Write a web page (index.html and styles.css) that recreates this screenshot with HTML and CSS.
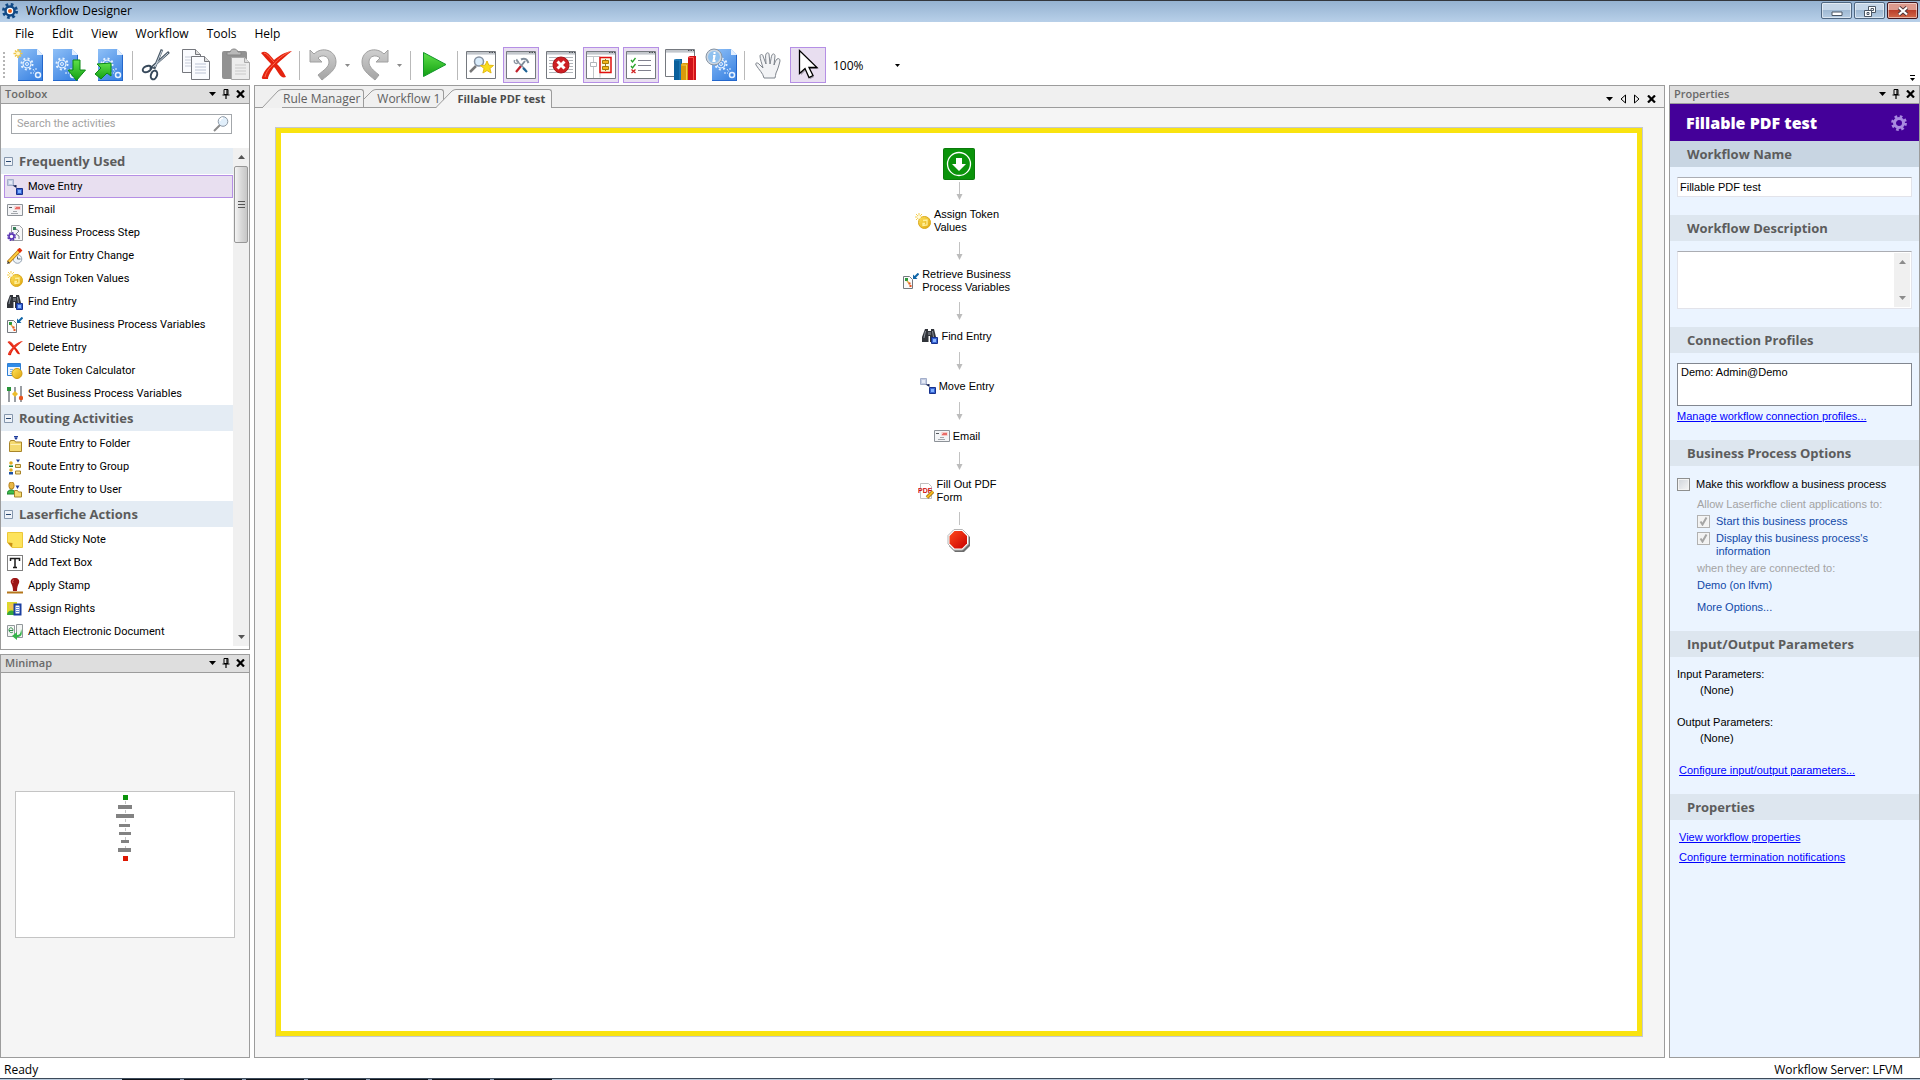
FILE: index.html
```html
<!DOCTYPE html>
<html lang="en">
<head>
    <meta charset="UTF-8">
    <meta name="viewport" content="width=device-width, initial-scale=1.0">
    <title>Workflow Designer</title>
    <link rel="stylesheet" href="styles.css">
</head>
<body>
    <!-- Shared icons -->
    <svg class="sprite" aria-hidden="true">
        <defs>
            <linearGradient id="gBlue" x1="0" y1="0" x2="0.6" y2="1">
                <stop offset="0" stop-color="#8fc0f7"/><stop offset="1" stop-color="#3f86e3"/>
            </linearGradient>
            <linearGradient id="gGreen" x1="0" y1="0" x2="0" y2="1">
                <stop offset="0" stop-color="#5fe04a"/><stop offset="1" stop-color="#12a012"/>
            </linearGradient>
            <linearGradient id="gGray" x1="0" y1="0" x2="0" y2="1">
                <stop offset="0" stop-color="#cfcfcf"/><stop offset="1" stop-color="#a4a4a4"/>
            </linearGradient>
            <linearGradient id="gGold" x1="0" y1="0" x2="1" y2="1">
                <stop offset="0" stop-color="#ffe45c"/><stop offset="1" stop-color="#dfa40c"/>
            </linearGradient>
            <linearGradient id="gStop" x1="0" y1="0" x2="1" y2="1">
                <stop offset="0" stop-color="#ff4a1c"/><stop offset="1" stop-color="#c80000"/>
            </linearGradient>

            <symbol id="sheet" viewBox="0 0 25 32">
                <path d="M0 0h19l6 6v26H0z" fill="url(#gBlue)"/>
                <path d="M0 32h25V6" fill="none" stroke="#2467cc" stroke-width="2"/>
                <path d="M19 0v6h6z" fill="#e4f0ff"/>
                <circle cx="9" cy="15" r="4" fill="none" stroke="#e6f2ff"/>
                <circle cx="9" cy="15" r="5.500" fill="none" stroke="#e6f2ff" stroke-width="2" stroke-dasharray="2 2.300"/>
                <circle cx="9" cy="15" r="1.500" fill="none" stroke="#e6f2ff"/>
                <circle cx="20" cy="26" r="2.500" fill="none" stroke="#e6f2ff" stroke-width="1.500"/>
                <path d="M12 24h4M15 20l2 3M18 19v3" stroke="#e6f2ff" fill="none" stroke-dasharray="2 1"/>
            </symbol>
            <symbol id="win" viewBox="0 0 30 28">
                <path d="M.5.5h29v27H.5z" fill="#fff" stroke="#75797f"/>
                <path d="M1 1h28v2H1z" fill="#c3c7cc"/>
                <path d="M1 3.500h28" stroke="#d9dce0"/>
                <path d="M23 1.500h1.500M25.500 1.500h1.500M28 1.500h1" stroke="#4c5157"/>
            </symbol>
            <symbol id="caret" viewBox="0 0 7 4"><path d="M0 0h7L3.500 4z" fill="currentColor"/></symbol>
            <symbol id="pin" viewBox="0 0 8 10">
                <path d="M2 .5h4v5H2z" fill="none" stroke="#000"/><path d="M5 1v5M.5 6h7M4 6v4" stroke="#000" stroke-width="1.200" fill="none"/>
            </symbol>
            <symbol id="close" viewBox="0 0 9 8"><path d="M1 .5l7 7M8 .5l-7 7" stroke="#000" stroke-width="2.200"/></symbol>
            <symbol id="magnifier" viewBox="0 0 16 16">
                <path d="M7 9l-6 6" stroke="#8c8c8c" stroke-width="2"/>
                <circle cx="10" cy="5.500" r="4.800" fill="#e1effb" stroke="#8d99a6"/>
                <path d="M7 5a3 3 0 0 1 3-3" stroke="#fff" stroke-width="1.500" fill="none"/>
            </symbol>
            <symbol id="collapse" viewBox="0 0 9 9">
                <path d="M.5.5h8v8h-8z" fill="#eef2f8" stroke="#8597ad"/><path d="M2 4.500h5" stroke="#26466e"/>
            </symbol>

            <symbol id="move" viewBox="0 0 16 16">
                <path d="M.5.5h6v6h-6z" fill="#c3cce2" stroke="#a3aeca"/><path d="M2 2h3v3H2z" fill="#e4e9f5"/>
                <path d="M5.500 6.500l4 2.500V6z" fill="#101d52"/>
                <path d="M9.500 9.500h6v6h-6z" fill="#3765d2" stroke="#17318e"/><path d="M11 11h3v3h-3z" fill="#7fb0ff"/>
            </symbol>
            <symbol id="email" viewBox="0 0 16 16">
                <path d="M.5 2.500h15v11H.5z" fill="#f3f4f6" stroke="#8d9298"/>
                <path d="M2 5.500h3" stroke="#55595e"/><path d="M7.500 4h6v4h-6z" fill="#f6c6c4"/><path d="M9 5.500h4M8 6.500h5" stroke="#e86c68"/>
                <path d="M6 9.500h4M4 11.500h7" stroke="#a1a6ab"/>
            </symbol>
            <symbol id="bpstep" viewBox="0 0 16 16">
                <path d="M4.500.5h8l3 3v12h-11z" fill="#f7f7f8" stroke="#9b9ea3"/>
                <path d="M6 2h3v3H6z" fill="#39805a"/><path d="M9 4l3 2-3 3 3 2M12 11v3" fill="none" stroke="#7b818a"/>
                <circle cx="4.500" cy="11.500" r="3.700" fill="none" stroke="#5b36b4" stroke-width="1.500" stroke-dasharray="1.700 1.200"/>
                <circle cx="4.500" cy="11.500" r="2.500" fill="#fff" stroke="#5b36b4" stroke-width="1.600"/>
            </symbol>
            <symbol id="wait" viewBox="0 0 16 16">
                <circle cx="10.500" cy="11" r="4.300" fill="#eef3f8" stroke="#93a1b0"/><path d="M10.500 8.500V11h3" fill="none" stroke="#566472"/>
                <path d="M1 14.500L12.500 2.500" stroke="#b47616" stroke-width="3.600"/><path d="M1.500 14L12 3" stroke="#ffce3e" stroke-width="2"/>
                <path d="M11.500 3.500l2.500-2.500" stroke="#e2320d" stroke-width="4"/><path d="M0 16l1-3 2 2z" fill="#3b3b3b"/>
            </symbol>
            <symbol id="token" viewBox="0 0 16 16">
                <circle cx="9.500" cy="9.500" r="6" fill="url(#gGold)" stroke="#d9a81c"/>
                <path d="M8 7.500l4-.5v5l-4 .5v-2h2" fill="none" stroke="#fff09a" stroke-width="1.300"/>
                <path d="M4 0v8M0 4h8M1 1l6 6M7 1L1 7" stroke="#f5cd4c"/><circle cx="4" cy="4" r="1.800" fill="#fffbe0"/>
            </symbol>
            <symbol id="find" viewBox="0 0 16 16">
                <path d="M3 1h3v2h3V1h3l2 8v5H8V8H6.500v6H0V9z" fill="#31343a"/>
                <path d="M3.500 3L2 10M10.500 3l1 6" stroke="#8d939c"/><path d="M6 4h3v3H6z" fill="#62666d"/>
                <path d="M9.500 9.500h6v6h-6z" fill="#3765d2" stroke="#17318e"/><path d="M11 11h3v3h-3z" fill="#8db7ff"/>
            </symbol>
            <symbol id="retrieve" viewBox="0 0 16 16">
                <path d="M.5 3.500h6l3 3v9h-9z" fill="#fafafa" stroke="#74787e"/>
                <path d="M2 5h3v3H2z" fill="#2d9a3c"/><path d="M4 8l3 3" stroke="#e5b04d" stroke-width="1.500"/>
                <path d="M5.500 9.500h2v2h-2zM6.500 12h2v2h-2z" fill="#e8551f"/>
                <path d="M15.500.5l-4 4" stroke="#0f66a8" stroke-width="2"/><path d="M10 1.500V6h4.500z" fill="#0f66a8"/>
            </symbol>
            <symbol id="delete" viewBox="0 0 32 28">
                <path d="M1 2C5-1 8 1 14 9 20 4 25 1 32 0 26 5 21 9 17 13c5 5 7 9 9 13-3 1-5 0-7-3-2-3-3-5-5-7-3 4-6 9-6 12-4 1-7 0-6-2 2-6 5-9 9-13C7 9 4 5 1 2z" fill="#e4230f"/>
                <path d="M4 2c4 1 6 5 10 9M29 1c-6 3-12 8-15 12-4 3-8 8-9 13" fill="none" stroke="#ff6e50"/>
            </symbol>
            <symbol id="datetoken" viewBox="0 0 16 16">
                <path d="M.5.500h13v12H.500z" fill="#eef5fd" stroke="#2f7fd4"/><path d="M1 1h12v3H1z" fill="#2f8be8"/>
                <path d="M3 6.500h3M3 8.500h2M3 10.500h2" stroke="#7eb1ea"/>
                <circle cx="10" cy="10.500" r="5" fill="url(#gGold)" stroke="#cf9a10"/>
            </symbol>
            <symbol id="setvars" viewBox="0 0 16 16">
                <path d="M2 1v15M8 1v15M14 0v16" stroke="#6f757c" stroke-width="1.400"/>
                <path d="M0 1h4v4H0z" fill="#29943a"/><path d="M8 5l3 3-3 3-3-3z" fill="#edbd2a"/><circle cx="14" cy="12" r="2.200" fill="#e8551f"/>
            </symbol>
            <symbol id="folder" viewBox="0 0 16 16">
                <path d="M2.500 6.500l1-2h4l1 1.500h6v9.500h-12z" fill="#f4da70" stroke="#a9852a"/><path d="M3.500 8.500h10" stroke="#fff2b8"/>
                <path d="M7 .5h4M9 0v3" stroke="#1e3c9c"/><path d="M7 1.500h4L9 4z" fill="#1e3c9c"/>
            </symbol>
            <symbol id="group" viewBox="0 0 16 16">
                <circle cx="4" cy="4" r="1.800" fill="#e2ac22"/><path d="M2 8V6.500h4V8z" fill="#1c8434"/>
                <circle cx="4" cy="11" r="1.800" fill="#e2ac22"/><path d="M2 15.500V13h4v2.500z" fill="#1b51a8"/>
                <path d="M8.500 5.500h5v3h-5zM8.500 12h5v3h-5z" fill="#f6e19a" stroke="#a9852a"/><path d="M9 .5h4L11 3.500z" fill="#1e3c9c"/>
            </symbol>
            <symbol id="user" viewBox="0 0 16 16">
                <path d="M0 12c0-5 8-6 8 0z" fill="#3fbd4c" stroke="#1a7f2a"/><rect x="2" y="0" width="5" height="7" rx="2.500" fill="#e8b745" stroke="#b57f17"/>
                <path d="M7.500 8.500h3l1 1.500h3v5h-7z" fill="#f4da70" stroke="#a9852a"/><path d="M8.500 3.500h4L10.500 7z" fill="#1e3c9c"/>
            </symbol>
            <symbol id="sticky" viewBox="0 0 16 16">
                <path d="M.5.500h15v15H5l-4.500-5z" fill="#fde35c" stroke="#ecc838"/><path d="M.5 10.500l5 .5-.5 4.500z" fill="#c78f13"/>
            </symbol>
            <symbol id="textbox" viewBox="0 0 16 16">
                <path d="M.5.500h15v15H.500z" fill="#fff" stroke="#000" stroke-dasharray="1 1"/>
                <path d="M3.500 6V3.500h9V6M8 3.500v9M6 12.500h4" fill="none" stroke="#1b1b1b" stroke-width="1.500"/>
            </symbol>
            <symbol id="stamp" viewBox="0 0 16 16">
                <path d="M8 0c3 0 5 2 4 5-1 2-2 4-2 8H6c0-4-1-6-2-8-1-3 1-5 4-5z" fill="#9c1515"/><path d="M7 2c-1 0-2 1-1 3" stroke="#d66" fill="none"/>
                <path d="M0 14.500h16" stroke="#b5761b" stroke-width="2"/>
            </symbol>
            <symbol id="rights" viewBox="0 0 16 16">
                <path d="M0 1h10v12H0z" fill="#ded82b"/><path d="M0 14c0-6 9-6 9 0z" fill="#35a83a"/><circle cx="5" cy="5.500" r="3" fill="#f2c34f"/>
                <path d="M7.500 3.500h6v10h-6z" fill="#fff" stroke="#1b3fa0" stroke-width="2"/><path d="M9 6.500h3M9 8.500h3M9 10.500h3" stroke="#6c90dd"/>
            </symbol>
            <symbol id="attach" viewBox="0 0 16 16">
                <path d="M.5 1.500h7v11h-7zM9.500.500h6v13h-6z" fill="#f4f6f4" stroke="#92989b"/>
                <path d="M2 6.500h4C6 3 2 3 2 6s3 3 4 2" fill="none" stroke="#2f8f49"/><path d="M14 5c0 5-2 6-4 6V8l-5 4 5 4v-3c4 0 6-2 4-8z" fill="#35b44a"/>
            </symbol>
            <symbol id="pdf" viewBox="0 0 16 16">
                <path d="M2.500.500h8l3 3v12h-11z" fill="#fff" stroke="#c0c0c0"/>
                <text x="0" y="10" font-family="Liberation Sans" font-size="7" font-weight="700" fill="#cf1010">PDF</text>
                <path d="M9 14.500l6-6" stroke="#8a6510" stroke-width="3.600"/><path d="M9 14.500l6-6" stroke="#f5b81e" stroke-width="2.200"/>
            </symbol>
            <symbol id="arrow" viewBox="0 0 7 18">
                <path d="M3.500 0v13" stroke="#c2c2c2"/><path d="M.5 12h6L3.500 18z" fill="#bcbcbc"/>
            </symbol>
        </defs>
    </svg>

    <header class="titlebar">
        <svg class="app-icon" viewBox="0 0 16 16">
            <circle cx="8" cy="8" r="6.500" fill="none" stroke="#124a86" stroke-width="3" stroke-dasharray="2.600 2.500"/>
            <circle cx="8" cy="8" r="4.500" fill="#fff" stroke="#124a86" stroke-width="2.500"/><circle cx="8" cy="8" r="2" fill="#e8601c"/>
        </svg>
        <h1>Workflow Designer</h1>
        <div class="window-buttons">
            <button class="window-btn" aria-label="Minimize"><svg viewBox="0 0 12 12"><path d="M1 7h10v3.500H1z" fill="#fff" stroke="#4b5765"/></svg></button>
            <button class="window-btn" aria-label="Restore"><svg viewBox="0 0 12 12"><path d="M4.500 1.500h7v6h-7zM7 3.500h2.500v2H7z" fill="#fff" stroke="#4b5765"/><path d="M.5 5.500h7v6h-7zM3 7.500h2v2H3z" fill="#fff" stroke="#4b5765"/></svg></button>
            <button class="window-btn window-close" aria-label="Close"><svg viewBox="0 0 12 12"><path d="M2 2.500l8 7M10 2.500l-8 7" stroke="#4c3438" stroke-width="4"/><path d="M2 2.500l8 7M10 2.500l-8 7" stroke="#fff" stroke-width="2.200"/></svg></button>
        </div>
    </header>

    <nav class="menubar">
        <button>File</button>
        <button>Edit</button>
        <button>View</button>
        <button>Workflow</button>
        <button>Tools</button>
        <button>Help</button>
    </nav>

    <div class="toolbar">
        <span class="grip"></span>
        <button class="tool" aria-label="New workflow"><svg viewBox="0 0 36 36">
            <use href="#sheet" x="7" y="2" width="25" height="32"/>
            <path d="M7 2v9M2.500 6.500h9M4 3.500l6 6M10 3.500l-6 6" stroke="#efc64a" stroke-width="1.500"/><circle cx="7" cy="6.500" r="2" fill="#fff7c8"/>
        </svg></button>
        <button class="tool" aria-label="Import"><svg viewBox="0 0 36 36">
            <use href="#sheet" x="2" y="2" width="25" height="32"/>
            <path d="M22 13h7v10h5.500L25.500 33.500 17 23h5z" fill="url(#gGreen)" stroke="#0c8a14"/>
        </svg></button>
        <button class="tool" aria-label="Publish"><svg viewBox="0 0 36 36">
            <use href="#sheet" x="7" y="2" width="25" height="32"/>
            <path d="M20 16v13l-4-3-6 6-6-5 6-6-4-4z" fill="url(#gGreen)" stroke="#0c8a14"/>
        </svg></button>
        <span class="sep"></span>
        <button class="tool" aria-label="Cut"><svg viewBox="0 0 36 36">
            <path d="M24 2.500L16 22M31 5L12 22" stroke="#4b5a68" stroke-width="2.600"/><path d="M24 3.500L17 20M30 6L15 20" stroke="#c9d4de"/>
            <ellipse cx="9" cy="22" rx="4.500" ry="2.800" transform="rotate(-25 9 22)" fill="none" stroke="#36485a" stroke-width="2"/>
            <ellipse cx="16" cy="28" rx="3" ry="4.500" transform="rotate(20 16 28)" fill="none" stroke="#36485a" stroke-width="2"/>
        </svg></button>
        <button class="tool" aria-label="Copy"><svg viewBox="0 0 36 36">
            <path d="M4.500 2.500h13l5 5v18h-18z" fill="#fafbfe" stroke="#75777d"/><path d="M17.500 2.500v5h5" fill="#ddd" stroke="#75777d"/><path d="M7 10h10M7 13h10M7 16h6M7 19h6" stroke="#c6cbd8"/>
            <path d="M13.500 9.500h13l5 5v18h-18z" fill="#fafbfe" stroke="#75777d"/><path d="M26.500 9.500v5h5" fill="#ddd" stroke="#75777d"/><path d="M17 17h11M17 20h11M17 23h11M17 26h11" stroke="#bcc3d4"/>
        </svg></button>
        <button class="tool" aria-label="Paste"><svg viewBox="0 0 36 36">
            <rect x="4" y="4" width="25" height="28" rx="2" fill="#929292"/><path d="M9 8V5h3c1-4 7-4 8 0h3v3z" fill="#b9b9b9" stroke="#858585"/>
            <path d="M13.500 10.500h13l5 5v17h-18z" fill="#ededed" stroke="#a8a8a8"/><path d="M26.500 10.500v5h5" fill="#ddd" stroke="#a8a8a8"/><path d="M17 18h11M17 21h11M17 24h11M17 27h11" stroke="#c9c9c9"/>
        </svg></button>
        <button class="tool" aria-label="Delete"><svg viewBox="0 0 36 36"><use href="#delete" x="2" y="4" width="32" height="28"/></svg></button>
        <span class="sep"></span>
        <div class="split">
            <button class="tool" aria-label="Undo"><svg viewBox="0 0 36 36">
                <path d="M5 3l4 4c8-8 22-4 22 8 0 8-7 12-14 18l-4-5c6-5 11-8 11-13 0-6-7-8-11-4l4 4H5z" fill="url(#gGray)" stroke="#a0a0a0"/>
            </svg></button>
            <button class="drop" aria-label="Undo list"><svg><use href="#caret"/></svg></button>
        </div>
        <div class="split">
            <button class="tool" aria-label="Redo"><svg viewBox="0 0 36 36">
                <path d="M31 3l-4 4C19-1 5 3 5 15c0 8 6 12 13 18l4-5c-6-5-10-8-10-13 0-6 7-8 11-4l-4 4h12z" fill="url(#gGray)" stroke="#a0a0a0"/>
            </svg></button>
            <button class="drop" aria-label="Redo list"><svg><use href="#caret"/></svg></button>
        </div>
        <span class="sep"></span>
        <button class="tool" aria-label="Run"><svg viewBox="0 0 36 36"><path d="M7.500 5.500L30 17.500 7.500 29.500z" fill="url(#gGreen)" stroke="#12962a"/></svg></button>
        <span class="sep"></span>
        <button class="tool" aria-label="Search results"><svg viewBox="0 0 36 36">
            <use href="#win" x="3" y="4" width="30" height="28"/>
            <path d="M13 19l-6 6" stroke="#777" stroke-width="2.500"/><circle cx="16" cy="14.500" r="4.500" fill="#d9ecfb" stroke="#8490a0" stroke-width="1.500"/>
            <path d="M24 14l1.800 4.200 4.700.3-3.600 3 1.200 4.500-4.100-2.500-4.100 2.500 1.200-4.500-3.600-3 4.700-.3z" fill="#f8dd1c" stroke="#e5bb12"/>
        </svg></button>
        <button class="tool on" aria-label="Toolbox"><svg viewBox="0 0 36 36">
            <use href="#win" x="3" y="4" width="30" height="28"/>
            <path d="M13 13l10 10" stroke="#8b96a2" stroke-width="1.500"/><path d="M11.500 13c-1 3 2 5 4 2l-2-3" fill="none" stroke="#8b96a2" stroke-width="1.300"/>
            <path d="M18 19l-5 6" stroke="#c2202c" stroke-width="2.200"/><path d="M18 19l4-5M18 12.500c4-2 6 0 7.500 3.500" fill="none" stroke="#7f8c9a" stroke-width="2"/><path d="M20 21l4 4" stroke="#1b5f94" stroke-width="2.200"/>
        </svg></button>
        <button class="tool" aria-label="Errors"><svg viewBox="0 0 36 36">
            <use href="#win" x="3" y="4" width="30" height="28"/>
            <path d="M6 10.500h24M6 13.500h24M6 16.500h24M6 19.500h24M6 22.500h24M6 25.500h24" stroke="#b2b6bb"/>
            <circle cx="18" cy="18" r="8" fill="#cd1f24" stroke="#a9171b"/><path d="M14.500 14.500l7 7M21.500 14.500l-7 7" stroke="#fff" stroke-width="3"/>
        </svg></button>
        <button class="tool on" aria-label="Minimap"><svg viewBox="0 0 36 36">
            <use href="#win" x="3" y="4" width="30" height="28"/>
            <path d="M10.500 9v7M10.500 20v11M4 9.500h13v21" fill="none" stroke="#c3c6ca"/><path d="M7.500 15.500h6v4h-6z" fill="#fff" stroke="#b1b5ba"/>
            <path d="M17 10.500h11v15H17z" fill="#faf7e2" stroke="#e11010" stroke-width="1.500"/><path d="M22.500 12v12" stroke="#a08018"/><path d="M19.500 13.500h6v3h-6zM19.500 19.500h6v3h-6z" fill="#f2b41c" stroke="#a47a0a"/>
        </svg></button>
        <button class="tool on" aria-label="Tasks"><svg viewBox="0 0 36 36">
            <use href="#win" x="3" y="4" width="30" height="28"/>
            <path d="M8 13l1.500 2 3-4M8 19l1.500 2 3-4" fill="none" stroke="#27a327" stroke-width="1.300"/><path d="M8.500 22.500l4 3.500M12.500 22.500l-4 3.500" stroke="#d02020" stroke-width="1.300"/>
            <path d="M15 13.500h13M15 18.500h13M15 23.500h13" stroke="#80808e"/>
        </svg></button>
        <button class="tool" aria-label="Statistics"><svg viewBox="0 0 36 36">
            <use href="#win" x="2" y="2" width="30" height="28"/>
            <path d="M11 13l2-1h6v21h-8z" fill="#0a609c"/><path d="M11 13h6v20" stroke="#2b88c6" fill="none"/>
            <path d="M18 17l2-1h6v17h-8z" fill="#d99a0a"/><path d="M18.500 18h5v15" stroke="#f8cc4c" fill="none"/>
            <path d="M25 10l2-1h6v24h-8z" fill="#cf1118"/><path d="M25.500 10.500h5V33" stroke="#ff5549" fill="none"/>
        </svg></button>
        <button class="tool" aria-label="Workflow information"><svg viewBox="0 0 36 36">
            <use href="#sheet" x="9" y="2" width="25" height="32"/>
            <circle cx="11" cy="10" r="7" fill="#8fc1ef" stroke="#cbd6e2" stroke-width="2"/><circle cx="11" cy="10" r="8" fill="none" stroke="#8795a5"/>
            <path d="M11.500 5v2M10 9h1.500l-1 5h2" fill="none" stroke="#fff" stroke-width="2"/>
        </svg></button>
        <span class="sep"></span>
        <button class="tool" aria-label="Pan"><svg viewBox="0 0 36 36">
            <path d="M14 31c-1-5-5-8-8-13-1-2 1-3 3-1l4 4c-1-4-3-9-3-12 0-2 3-2 3 0l3 8c0-4-1-8 0-10 1-2 3-1 3 0l1 10c1-4 1-7 2-9 1-2 3-1 3 1l-1 9c1-3 2-5 3-6 2-1 3 0 3 2-1 4-2 8-4 12 0 2-1 3-1 5z" fill="#f2f3f5" stroke="#7f858d"/>
        </svg></button>
        <button class="tool on" aria-label="Select"><svg viewBox="0 0 36 36">
            <path d="M11 6v22l5-5 4 9 4-2-4-8h8z" fill="#9d97a5"/><path d="M9.500 3.500v23l5.500-5 4 9 4-2-4-8h8z" fill="#fff" stroke="#000" stroke-width="1.300"/>
        </svg></button>
        <div class="zoom">
            <span>100%</span>
            <button class="drop" aria-label="Zoom level"><svg><use href="#caret"/></svg></button>
        </div>
        <svg class="overflow" viewBox="0 0 7 7"><path d="M1 .5h5" stroke="#000"/><path d="M1 3h5L3.500 6z"/></svg>
    </div>

    <main class="workspace">
        <div class="side-left">
            <section class="panel toolbox">
                <div class="panel-head">
                    <h2>Toolbox</h2>
                    <button aria-label="Options"><svg class="caret"><use href="#caret"/></svg></button>
                    <button aria-label="Pin"><svg class="pin"><use href="#pin"/></svg></button>
                    <button aria-label="Close"><svg class="close"><use href="#close"/></svg></button>
                </div>
                <div class="search">
                    <input type="text" placeholder="Search the activities" aria-label="Search the activities">
                    <svg class="icon"><use href="#magnifier"/></svg>
                </div>
                <div class="activity-scroll">
                    <div class="activities">
                        <h3><svg><use href="#collapse"/></svg>Frequently Used</h3>
                        <ul>
                            <li><button class="selected"><svg class="icon"><use href="#move"/></svg>Move Entry</button></li>
                            <li><button><svg class="icon"><use href="#email"/></svg>Email</button></li>
                            <li><button><svg class="icon"><use href="#bpstep"/></svg>Business Process Step</button></li>
                            <li><button><svg class="icon"><use href="#wait"/></svg>Wait for Entry Change</button></li>
                            <li><button><svg class="icon"><use href="#token"/></svg>Assign Token Values</button></li>
                            <li><button><svg class="icon"><use href="#find"/></svg>Find Entry</button></li>
                            <li><button><svg class="icon"><use href="#retrieve"/></svg>Retrieve Business Process Variables</button></li>
                            <li><button><svg class="icon"><use href="#delete"/></svg>Delete Entry</button></li>
                            <li><button><svg class="icon"><use href="#datetoken"/></svg>Date Token Calculator</button></li>
                            <li><button><svg class="icon"><use href="#setvars"/></svg>Set Business Process Variables</button></li>
                        </ul>
                        <h3><svg><use href="#collapse"/></svg>Routing Activities</h3>
                        <ul>
                            <li><button><svg class="icon"><use href="#folder"/></svg>Route Entry to Folder</button></li>
                            <li><button><svg class="icon"><use href="#group"/></svg>Route Entry to Group</button></li>
                            <li><button><svg class="icon"><use href="#user"/></svg>Route Entry to User</button></li>
                        </ul>
                        <h3><svg><use href="#collapse"/></svg>Laserfiche Actions</h3>
                        <ul>
                            <li><button><svg class="icon"><use href="#sticky"/></svg>Add Sticky Note</button></li>
                            <li><button><svg class="icon"><use href="#textbox"/></svg>Add Text Box</button></li>
                            <li><button><svg class="icon"><use href="#stamp"/></svg>Apply Stamp</button></li>
                            <li><button><svg class="icon"><use href="#rights"/></svg>Assign Rights</button></li>
                            <li><button><svg class="icon"><use href="#attach"/></svg>Attach Electronic Document</button></li>
                        </ul>
                    </div>
                    <div class="scrollbar">
                        <svg class="caret up"><use href="#caret"/></svg>
                        <div class="thumb"></div>
                        <svg class="caret"><use href="#caret"/></svg>
                    </div>
                </div>
            </section>

            <section class="panel minimap">
                <div class="panel-head">
                    <h2>Minimap</h2>
                    <button aria-label="Options"><svg class="caret"><use href="#caret"/></svg></button>
                    <button aria-label="Pin"><svg class="pin"><use href="#pin"/></svg></button>
                    <button aria-label="Close"><svg class="close"><use href="#close"/></svg></button>
                </div>
                <div class="map-area">
                    <svg class="map" viewBox="0 0 218 145" shape-rendering="crispEdges">
                        <path d="M109.500 9v53" stroke="#c4c4c4" stroke-dasharray="3 6"/>
                        <path d="M107 3h5v5h-5z" fill="#0b930b"/>
                        <path d="M102 13h14v4h-14zM100 22h18v4h-18zM103 32h11v3h-11zM103 40h12v3h-12zM105 48h8v3h-8zM102 56h13v4h-13z" fill="#828282"/>
                        <path d="M107 64h5v5h-5z" fill="#dd1600"/>
                    </svg>
                </div>
            </section>
        </div>

        <section class="panel designer">
            <div class="tabs">
                <button class="tab"><svg viewBox="0 0 20 19"><path d="M0 19L16 2Q18 .5 20 .5V19z" fill="#f0f0f0"/><path d="M0 19L16 2Q18 .5 20 .5" fill="none" stroke="#9c9c9c"/></svg><span>Rule Manager</span></button>
                <button class="tab second"><svg viewBox="0 0 12 19"><path d="M0 10L8 2Q10 .5 12 .5" fill="none" stroke="#9c9c9c"/></svg><span>Workflow 1</span></button>
                <button class="tab active"><svg viewBox="0 0 20 19"><path d="M0 19L16 2Q18 .5 20 .5V19z" fill="#f5f5f5"/><path d="M0 18.500L16 2Q18 .5 20 .5" fill="none" stroke="#9c9c9c"/></svg><span>Fillable PDF test</span></button>
                <div class="tab-tools">
                    <button aria-label="Open documents"><svg class="caret"><use href="#caret"/></svg></button>
                    <button aria-label="Previous"><svg class="step" viewBox="0 0 6 10"><path d="M5.500 1v8L1 5z" fill="none" stroke="#000"/></svg></button>
                    <button aria-label="Next"><svg class="step" viewBox="0 0 6 10"><path d="M.5 1v8L5 5z" fill="none" stroke="#000"/></svg></button>
                    <button aria-label="Close"><svg class="close"><use href="#close"/></svg></button>
                </div>
            </div>
            <div class="canvas-area">
                <div class="canvas">
                    <svg class="start" viewBox="0 0 32 32">
                        <rect x=".5" y=".5" width="31" height="31" rx="1" fill="#0a930a" stroke="#0b7a0b"/>
                        <circle cx="16" cy="16" r="11.500" fill="none" stroke="#fff" stroke-width="1.300"/>
                        <path d="M13 10h6v6h4l-7 7-7-7h4z" fill="#fff"/>
                    </svg>
                    <svg class="arrow"><use href="#arrow"/></svg>
                    <div class="node"><svg class="icon"><use href="#token"/></svg><span>Assign Token<br>Values</span></div>
                    <svg class="arrow"><use href="#arrow"/></svg>
                    <div class="node"><svg class="icon"><use href="#retrieve"/></svg><span>Retrieve Business<br>Process Variables</span></div>
                    <svg class="arrow"><use href="#arrow"/></svg>
                    <div class="node"><svg class="icon"><use href="#find"/></svg><span>Find Entry</span></div>
                    <svg class="arrow"><use href="#arrow"/></svg>
                    <div class="node"><svg class="icon"><use href="#move"/></svg><span>Move Entry</span></div>
                    <svg class="arrow"><use href="#arrow"/></svg>
                    <div class="node"><svg class="icon"><use href="#email"/></svg><span>Email</span></div>
                    <svg class="arrow"><use href="#arrow"/></svg>
                    <div class="node"><svg class="icon"><use href="#pdf"/></svg><span>Fill Out PDF<br>Form</span></div>
                    <div class="line"></div>
                    <svg class="stop" viewBox="0 0 24 24">
                        <path d="M8 2h9l6 6v9l-6 6H8l-6-6V8z" fill="#6d6d6d"/>
                        <path d="M7 .5h8.500l6 6V15l-6 6H7l-6-6V6.500z" fill="#fff" stroke="#b5b5b5"/>
                        <path d="M7.500 2h7.500l5 5v7.500l-5 5H7.500l-5-5V7z" fill="url(#gStop)"/>
                    </svg>
                </div>
            </div>
        </section>

        <aside class="panel properties">
            <div class="panel-head">
                <h2>Properties</h2>
                <button aria-label="Options"><svg class="caret"><use href="#caret"/></svg></button>
                <button aria-label="Pin"><svg class="pin"><use href="#pin"/></svg></button>
                <button aria-label="Close"><svg class="close"><use href="#close"/></svg></button>
            </div>
            <div class="props-title">
                <strong>Fillable PDF test</strong>
                <svg viewBox="0 0 16 16"><circle cx="8" cy="8" r="6.500" fill="none" stroke="#a98ae0" stroke-width="2.800" stroke-dasharray="2.600 2.500"/><circle cx="8" cy="8" r="4.500" fill="none" stroke="#a98ae0" stroke-width="3"/></svg>
            </div>

            <h3 class="current"><label for="wf-name">Workflow Name</label></h3>
            <div class="group">
                <input id="wf-name" type="text" value="Fillable PDF test">
            </div>

            <h3><label for="wf-desc">Workflow Description</label></h3>
            <div class="group">
                <div class="desc">
                    <textarea id="wf-desc"></textarea>
                    <div class="desc-scroll">
                        <svg class="caret up"><use href="#caret"/></svg>
                        <svg class="caret"><use href="#caret"/></svg>
                    </div>
                </div>
            </div>

            <h3>Connection Profiles</h3>
            <div class="group profiles">
                <ul class="profile-list"><li>Demo: Admin@Demo</li></ul>
                <a href="#">Manage workflow connection profiles...</a>
            </div>

            <h3>Business Process Options</h3>
            <div class="group options">
                <label><input type="checkbox">Make this workflow a business process</label>
                <div class="sub">
                    <p>Allow Laserfiche client applications to:</p>
                    <label><input type="checkbox" checked disabled>Start this business process</label>
                    <label><input type="checkbox" checked disabled>Display this business process's<br>information</label>
                    <p>when they are connected to:</p>
                    <p class="blue">Demo (on lfvm)</p>
                    <a class="more" href="#">More Options...</a>
                </div>
            </div>

            <h3>Input/Output Parameters</h3>
            <div class="group params">
                <dl>
                    <dt>Input Parameters:</dt>
                    <dd>(None)</dd>
                    <dt>Output Parameters:</dt>
                    <dd>(None)</dd>
                </dl>
                <a href="#">Configure input/output parameters...</a>
            </div>

            <h3>Properties</h3>
            <div class="group links">
                <a href="#">View workflow properties</a>
                <a href="#">Configure termination notifications</a>
            </div>
        </aside>
    </main>

    <footer class="statusbar">
        <span>Ready</span>
        <span>Workflow Server: LFVM</span>
    </footer>
    <div class="taskbar-edge"><span></span></div>
</body>
</html>
```
FILE: styles.css
```css
* {
    margin: 0;
    padding: 0;
    box-sizing: border-box;
}

body {
    font-family: "Open Sans", "Noto Sans", sans-serif;
    font-size: 12px;
    color: #000;
    background: #fff;
    height: 100vh;
    display: flex;
    flex-direction: column;
    overflow: hidden;
}

button {
    font: inherit;
    color: inherit;
    background: none;
    border: none;
}

ul {
    list-style: none;
}

svg {
    display: block;
    flex: none;
}

.sprite {
    position: absolute;
    width: 0;
    height: 0;
}

.icon {
    width: 16px;
    height: 16px;
}

.caret {
    width: 7px;
    height: 4px;
}

.caret.up {
    transform: rotate(180deg);
}

.pin {
    width: 8px;
    height: 10px;
}

.close {
    width: 9px;
    height: 8px;
}

/* Title bar */
.titlebar {
    height: 22px;
    padding: 0 2px 2px;
    border-top: 1px solid #33363c;
    background: linear-gradient(#95b2d1, #b8d0e9);
    display: flex;
    align-items: center;
}

.titlebar h1 {
    flex: 1;
    margin-left: 8px;
    font-size: 12px;
    font-weight: 400;
}

.app-icon {
    width: 16px;
    height: 16px;
}

.window-buttons {
    display: flex;
    gap: 2px;
}

.window-btn {
    width: 31px;
    height: 17px;
    border: 1px solid #4f6781;
    border-radius: 2px;
    background: linear-gradient(#c5d6e8 45%, #9fb9d3 50%, #b6cde3);
    box-shadow: inset 0 0 0 1px rgba(255, 255, 255, 0.5);
    display: flex;
    align-items: center;
    justify-content: center;
}

.window-btn svg {
    width: 12px;
    height: 12px;
}

.window-close {
    border-color: #43161d;
    background: linear-gradient(#dd9a8d 45%, #bb3f2b 50%, #d2694a);
}

/* Menu */
.menubar {
    height: 23px;
    padding-left: 6px;
    display: flex;
    align-items: center;
}

.menubar button {
    padding: 0 9px;
}

/* Toolbar */
.toolbar {
    height: 40px;
    padding: 0 4px 0 3px;
    display: flex;
    align-items: center;
    gap: 4px;
}

.grip {
    width: 2px;
    height: 26px;
    margin-right: 2px;
    background: repeating-linear-gradient(#b5b5b5 0 2px, #fff 2px 4px);
}

.tool {
    width: 36px;
    height: 36px;
    border: 1px solid transparent;
}

.tool svg {
    width: 36px;
    height: 36px;
    margin: -1px;
}

.tool.on {
    background: #e8def0;
    border-color: #b58fe5;
}

.sep {
    width: 1px;
    height: 29px;
    margin: 0 1px;
    background: #b9b9b9;
}

.split {
    display: flex;
    align-items: center;
}

.drop {
    width: 12px;
    height: 36px;
    display: flex;
    align-items: center;
    justify-content: center;
    color: #8a8a8a;
}

.drop svg {
    width: 5px;
    height: 3px;
}

.zoom {
    width: 70px;
    margin-left: 3px;
    display: flex;
    align-items: center;
    justify-content: space-between;
}

.zoom .drop {
    color: #000;
}

.overflow {
    width: 7px;
    height: 7px;
    margin: auto 0 3px auto;
}

/* Docked panels */
.workspace {
    flex: 1;
    min-height: 0;
    display: flex;
    gap: 4px;
}

.panel {
    border: 1px solid #9c9c9c;
    background: #f5f5f5;
    display: flex;
    flex-direction: column;
}

.panel-head {
    height: 18px;
    padding: 0 2px 1px 4px;
    border-bottom: 1px solid #9c9c9c;
    background: #dedede;
    display: flex;
    align-items: center;
    flex: none;
}

.panel-head h2 {
    flex: 1;
    font-size: 11px;
    line-height: 16px;
    font-weight: 600;
    color: #696969;
}

.panel-head button {
    width: 14px;
    display: flex;
    justify-content: center;
}

.side-left {
    width: 250px;
    display: flex;
    flex-direction: column;
    gap: 4px;
}

/* Toolbox */
.toolbox {
    height: 565px;
    flex: none;
    background: #fff;
}

.search {
    height: 20px;
    margin: 10px 17px 14px 10px;
    padding-right: 2px;
    border: 1px solid #a3a7ab;
    display: flex;
    align-items: center;
    flex: none;
}

.search input {
    flex: 1;
    min-width: 0;
    padding-left: 5px;
    border: none;
    outline: none;
    font: 11px/16px Roboto, sans-serif;
}

.search input::placeholder {
    color: #a2a2a2;
}

.activity-scroll {
    flex: 1;
    min-height: 0;
    margin-bottom: 3px;
    display: flex;
}

.activities {
    flex: 1;
}

.activities h3 {
    height: 26px;
    padding-left: 3px;
    background: #e4ecf4;
    color: #5c5c5c;
    font-size: 13px;
    font-weight: 700;
    display: flex;
    align-items: center;
    gap: 6px;
}

.activities h3 svg {
    width: 9px;
    height: 9px;
}

.activities ul {
    padding: 1px 0 0 3px;
}

.activities li button {
    width: 100%;
    height: 23px;
    padding-left: 2px;
    border: 1px solid transparent;
    font-family: Roboto, sans-serif;
    font-size: 11px;
    text-align: left;
    display: flex;
    align-items: center;
    gap: 5px;
}

.activities li .selected {
    background: #e8dff0;
    border-color: #b58fe5;
}

.scrollbar {
    width: 16px;
    padding: 7px 0;
    background: #f0f0f0;
    display: flex;
    flex-direction: column;
    align-items: center;
}

.thumb {
    width: 14px;
    height: 77px;
    margin: 7px 0 auto;
    border: 1px solid #979797;
    border-radius: 2px;
    background:
        repeating-linear-gradient(#555 0 1px, transparent 1px 3px) center / 7px 8px no-repeat,
        linear-gradient(90deg, #f4f4f4, #d9d9d9 50%, #c6c6c6);
}

.scrollbar .caret {
    color: #555;
}

.desc-scroll .caret {
    color: #8c8c8c;
}

/* Minimap */
.minimap {
    flex: 1;
    min-height: 0;
}

.map-area {
    flex: 1;
    padding: 0 14px 2px;
    display: flex;
    align-items: center;
}

.map {
    width: 100%;
    border: 1px solid #c4c4c4;
    background: #fff;
}

/* Designer */
.designer {
    flex: 1;
    min-width: 0;
}

.tabs {
    height: 22px;
    padding: 3px 6px 0 7px;
    background: linear-gradient(#9c9c9c, #9c9c9c) bottom / 100% 1px no-repeat, #f0f0f0;
    display: flex;
    flex: none;
}

.tab {
    height: 19px;
    color: #606060;
    display: flex;
}

.tab svg {
    height: 19px;
    width: 20px;
}

.tab span {
    height: 18px;
    padding: 0 3px 0 1px;
    border-top: 1px solid #9c9c9c;
    border-right: 1px solid #9c9c9c;
    border-radius: 0 3px 0 0;
    line-height: 17px;
}

.tab.second svg {
    width: 12px;
}

.tab.active {
    margin-left: -8px;
    color: #4c4c4c;
    font-weight: 700;
    font-size: 11px;
}

.tab.active span {
    height: 19px;
    padding-right: 6px;
    background: #f5f5f5;
}

.tab-tools {
    margin-left: auto;
    display: flex;
    align-items: center;
}

.tab-tools button {
    width: 14px;
    display: flex;
    justify-content: center;
}

.step {
    width: 6px;
    height: 10px;
}

.canvas-area {
    flex: 1;
    min-height: 0;
    padding: 20px 22px 21px 21px;
    display: flex;
}

.canvas {
    flex: 1;
    padding-top: 15px;
    border: 5px solid #f9e310;
    outline: 1px solid #c4c8d0;
    background: #fff;
    display: flex;
    flex-direction: column;
    align-items: center;
}

.start {
    width: 32px;
    height: 32px;
    margin-bottom: 2px;
}

.arrow {
    width: 7px;
    height: 18px;
}

.node {
    min-height: 32px;
    padding: 8px 4px 8px 0;
    font: 11px/13px "Liberation Sans", Arial, sans-serif;
    display: flex;
    align-items: center;
    gap: 3px;
}

.line {
    width: 1px;
    height: 13px;
    background: #c2c2c2;
}

.stop {
    width: 24px;
    height: 24px;
    margin-top: 4px;
}

/* Properties */
.properties {
    width: 251px;
    background: #ebf4ff;
    font: 11px/13px "Liberation Sans", Arial, sans-serif;
}

.properties .panel-head {
    font-family: "Open Sans", "Noto Sans", sans-serif;
}

.props-title {
    height: 37px;
    padding: 0 12px 0 16px;
    background: #440099;
    color: #fff;
    font: 700 16px/20px "Open Sans", "Noto Sans", sans-serif;
    display: flex;
    align-items: center;
    justify-content: space-between;
}

.props-title svg {
    width: 16px;
    height: 16px;
}

.properties h3 {
    padding-left: 17px;
    background: #dde6ef;
    color: #5c5c5c;
    font: 700 13px/26px "Open Sans", "Noto Sans", sans-serif;
}

.properties h3.current {
    background: #c8d5e2;
}

.group {
    padding: 10px 7px 18px;
}

.group a {
    color: #0000ff;
}

#wf-name {
    display: block;
    width: 100%;
    height: 20px;
    padding: 0 2px;
    border: 1px solid #e2e3ea;
    border-top-color: #abadb3;
    font: inherit;
}

.desc {
    height: 58px;
    padding: 1px;
    border: 1px solid #e2e3ea;
    border-top-color: #abadb3;
    background: #fff;
    display: flex;
}

.desc textarea {
    flex: 1;
    min-width: 0;
    border: none;
    outline: none;
    resize: none;
    font: inherit;
}

.desc-scroll {
    width: 16px;
    padding: 7px 0;
    background: #f0f0f0;
    display: flex;
    flex-direction: column;
    align-items: center;
    justify-content: space-between;
}

.profile-list {
    height: 43px;
    margin-bottom: 4px;
    padding: 2px 3px;
    border: 1px solid #828790;
    background: #fff;
}

.profiles {
    padding-bottom: 17px;
}

.options {
    padding: 12px 7px 17px;
}

.options label {
    display: flex;
    gap: 6px;
}

.options input {
    appearance: none;
    width: 13px;
    height: 13px;
    border: 1px solid #8e8f8f;
    outline: 1px solid #f4f4f4;
    outline-offset: -2px;
    background: linear-gradient(135deg, #cfd4da, #f6f6f6);
    flex: none;
}

.options input:disabled {
    border-color: #b1b1b1;
    background: #f2f2f2 url("data:image/svg+xml,%3Csvg xmlns='http://www.w3.org/2000/svg' viewBox='0 0 11 11'%3E%3Cpath d='M2.500 5.500l2 3 4-7' fill='none' stroke='%23a5a5a5' stroke-width='2'/%3E%3C/svg%3E");
}

.sub {
    margin: 7px 0 0 20px;
    color: #a3a3a3;
    display: flex;
    flex-direction: column;
    gap: 4px;
}

.options .sub label,
.options .sub .blue,
.options .sub .more {
    color: #1149a8;
}

.sub .more {
    margin-top: 5px;
    text-decoration: none;
}

.params {
    padding: 11px 7px 17px;
}

.params dd {
    margin: 3px 0 19px 23px;
}

.params a {
    margin-left: 2px;
}

.links {
    display: flex;
    flex-direction: column;
    align-items: flex-start;
    gap: 7px;
    padding: 11px 9px;
}

/* Status bar */
.statusbar {
    height: 20px;
    padding: 2px 17px 0 4px;
    display: flex;
    align-items: center;
    justify-content: space-between;
}

.taskbar-edge {
    height: 2px;
    padding-left: 122px;
    border-top: 1px solid #3c4a5a;
    background: #b9cbdd;
}

.taskbar-edge span {
    display: block;
    width: 430px;
    height: 1px;
    background: repeating-linear-gradient(90deg, #0d1117 0 58px, #8b9bb0 58px 62px);
}
```
